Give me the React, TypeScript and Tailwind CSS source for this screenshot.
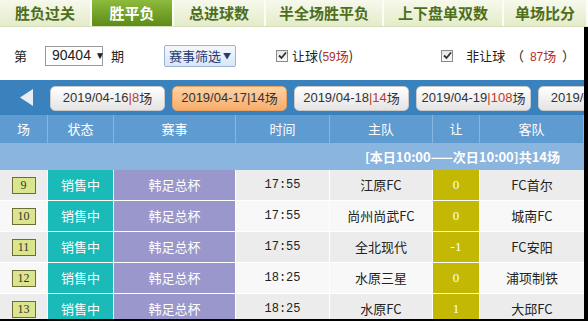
import React from 'react';

const tabs = ['胜负过关', '胜平负', '总进球数', '半全场胜平负', '上下盘单双数', '单场比分'];
const tabWidths = ['w-[92px]', 'w-[82px]', 'w-[92px]', 'w-[118px]', 'w-[120px]', 'w-[84px]'];

const dates = [
  { d: '2019/04-16', n: '8', active: false },
  { d: '2019/04-17', n: '14', active: true },
  { d: '2019/04-18', n: '14', active: false },
  { d: '2019/04-19', n: '108', active: false },
  { d: '2019/04-20', n: '2', active: false },
];

const matches = [
  { no: '9', time: '17:55', home: '江原FC', hc: '0', away: 'FC首尔' },
  { no: '10', time: '17:55', home: '尚州尚武FC', hc: '0', away: '城南FC' },
  { no: '11', time: '17:55', home: '全北现代', hc: '-1', away: 'FC安阳' },
  { no: '12', time: '18:25', home: '水原三星', hc: '0', away: '浦项制铁' },
  { no: '13', time: '18:25', home: '水原FC', hc: '1', away: '大邱FC' },
];

const cols = 'grid grid-cols-[48px_66px_122px_94px_103px_47px_104px]';

const CheckBox = () => (
  <span className="w-[12px] h-[12px] shrink-0 border border-[#8a8a8a] bg-gradient-to-b from-[#e6e6e6] to-[#fafafa] flex items-center justify-center">
    <svg width="9" height="9" viewBox="0 0 9 9">
      <path d="M1 4.5 L3.5 7 L8 1.5" stroke="#333" strokeWidth="1.8" fill="none" />
    </svg>
  </span>
);

const App: React.FC = () => {
  return (
    <div className="w-[588px] h-[321px] overflow-hidden bg-white font-['Noto_Sans_CJK_SC',sans-serif] text-[13px] text-[#222]">
      {/* tabs */}
      <div className="h-[27px] flex bg-gradient-to-b from-[#f6f9ec] to-[#e4ecc9] border-b border-[#d6dfbb]">
        {tabs.map((t, i) => (
          <div
            key={t}
            className={`${tabWidths[i]} h-full flex items-center justify-center text-[15px] font-bold border-r-2 border-[#fbfdf4] ${
              i === 1
                ? 'bg-gradient-to-b from-[#8dbb3c] to-[#5d8c17] text-white'
                : 'text-[#4f6e1c]'
            }`}
          >
            {t}
          </div>
        ))}
      </div>

      <div className="h-[294px] border-r-4 border-b-2 border-black overflow-hidden">
        {/* filter row */}
        <div className="h-[53px] flex items-center pt-[4px] text-[13px] text-[#222] whitespace-nowrap">
          <span className="ml-[14px] shrink-0">第</span>
          <span className="ml-[18px] shrink-0 w-[58px] h-[20px] border border-[#9a9a9a] flex items-center px-[6px] font-['Liberation_Sans',sans-serif] text-[14px]">
            90404 <span className="ml-[4px] text-[10px]">▼</span>
          </span>
          <span className="ml-[8px] shrink-0">期</span>
          <span className="ml-[40px] shrink-0 w-[72px] h-[22px] border border-[#9fb4d4] rounded-[2px] bg-gradient-to-b from-[#f4f8fd] to-[#d9e6f6] flex items-center justify-center text-[#1f3b73] text-[13px]">
            赛事筛选<span className="ml-[2px] text-[8px]">▼</span>
          </span>
          <span className="ml-[40px] shrink-0 flex"><CheckBox /></span>
          <span className="ml-[4px] shrink-0">
            让球(<span className="text-[#b0322c] text-[12px] font-['Liberation_Sans',sans-serif]">59</span>
            <span className="text-[#b0322c]">场</span>)
          </span>
          <span className="ml-[88px] shrink-0 flex"><CheckBox /></span>
          <span className="ml-[13px] shrink-0 whitespace-pre">
            非让球  （  <span className="text-[#b0322c] text-[12px] font-['Liberation_Sans',sans-serif]">87</span>
            <span className="text-[#b0322c]">场</span>  ）
          </span>
        </div>

        {/* date bar */}
        <div className="h-[35px] bg-[#3a82bd] flex items-center overflow-hidden">
          <div className="w-[50px] shrink-0 flex justify-center pl-[3px]">
            <svg width="14" height="17" viewBox="0 0 14 17">
              <polygon points="13,0 13,17 0,8.5" fill="#e9eef4" />
            </svg>
          </div>
          <div className="flex gap-[7px] pt-[1px]">
            {dates.map((d) => (
              <div
                key={d.d}
                className={`w-[115px] h-[25px] shrink-0 rounded-[5px] border flex items-center justify-center whitespace-nowrap font-['Liberation_Sans',sans-serif] text-[13px] text-[#333] ${
                  d.active
                    ? 'bg-gradient-to-b from-[#fcd3a4] to-[#f8ad6b] border-[#e6a060]'
                    : 'bg-gradient-to-b from-[#ffffff] to-[#e4e4e4] border-[#c9c9c9]'
                }`}
              >
                {d.d}
                <span className={d.active ? '' : 'text-[#c0392b]'}>|{d.n}</span>
                <span className="font-['Noto_Sans_CJK_SC',sans-serif]">场</span>
              </div>
            ))}
          </div>
        </div>

        {/* header */}
        <div className={`${cols} h-[28px] bg-[#5e9bd1] text-white text-[13px]`}>
          {['场', '状态', '赛事', '时间', '主队', '让', '客队'].map((h) => (
            <div key={h} className="flex items-center justify-center border-r border-[#86b6e0]">
              {h}
            </div>
          ))}
        </div>

        {/* info row */}
        <div className="h-[27px] bg-[#8ab5df] flex items-center justify-end pr-[24px] text-white font-bold text-[13px]">
          [本日10:00——次日10:00]共14场
        </div>

        {/* rows */}
        {matches.map((m, i) => {
          const bg = i % 2 === 0 ? 'bg-[#ececec]' : 'bg-[#f8f8f8]';
          return (
            <div key={m.no} className={`${cols} h-[31px] border-b border-white`}>
              <div className={`${bg} flex items-center justify-center border-r border-white`}>
                <span className="w-[24px] h-[17px] bg-[#dbe58c] border border-[#6d6d3a] flex items-center justify-center font-['Liberation_Serif',serif] text-[12px] text-[#333]">
                  {m.no}
                </span>
              </div>
              <div className="bg-[#19bab7] text-white flex items-center justify-center border-r border-white">销售中</div>
              <div className="bg-[#9997cb] text-white flex items-center justify-center border-r border-white">韩足总杯</div>
              <div className={`${bg} flex items-center justify-center font-['Liberation_Mono',monospace] text-[12px] border-r border-white`}>
                {m.time}
              </div>
              <div className={`${bg} flex items-center justify-center border-r border-white`}>{m.home}</div>
              <div className="bg-[#c3b804] text-white flex items-center justify-center border-r border-white font-['Liberation_Serif',serif]">
                {m.hc}
              </div>
              <div className={`${bg} flex items-center justify-center`}>{m.away}</div>
            </div>
          );
        })}
      </div>
    </div>
  );
};

export default App;
